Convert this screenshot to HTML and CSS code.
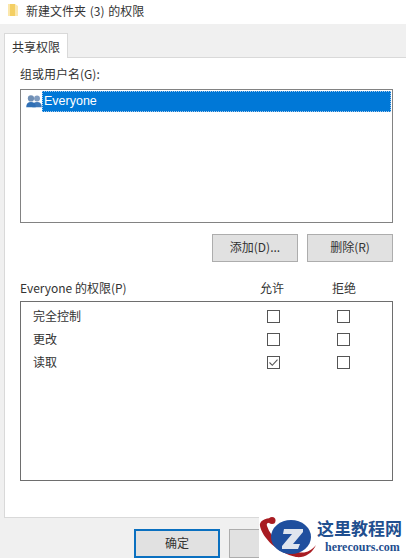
FILE: index.html
```html
<!DOCTYPE html>
<html lang="zh-CN">
<head>
    <meta charset="UTF-8">
    <title>新建文件夹 (3) 的权限</title>
    <link rel="stylesheet" href="styles.css">
</head>
<body>
    <div class="dialog">
        <div class="titlebar">
            <svg class="folder" width="10" height="12" viewBox="0 0 10 12">
                <path d="M0 0h7l3 2v10H0z" fill="#fbe7ac"/>
                <path d="M2 0h5v12H2z" fill="#f4cf63"/>
            </svg>
            <span>新建文件夹 (3) 的权限</span>
        </div>

        <div class="content">
            <div class="tabs">
                <div class="tab">共享权限</div>
            </div>

            <div class="panel">
                <div class="field-label">组或用户名(G):</div>
                <div class="user-list">
                    <div class="user-row">
                        <svg class="users-icon" width="16" height="13" viewBox="0 0 18 15">
                            <circle cx="12.500" cy="4" r="3.400" fill="#7f9cc0"/>
                            <path d="M7 14c0-4 2-6 5.500-6s5.500 2 5.500 6z" fill="#3f78b8"/>
                            <circle cx="5.500" cy="4" r="3.600" fill="#6f8fb5"/>
                            <path d="M0 14c0-4 2-6 5.500-6s5.500 2 5.500 6z" fill="#2f6fb5"/>
                        </svg>
                        <span class="user-name">Everyone</span>
                    </div>
                </div>

                <div class="list-buttons">
                    <button class="btn">添加(D)...</button>
                    <button class="btn">删除(R)</button>
                </div>

                <div class="perm-header">
                    <span class="perm-name">Everyone 的权限(P)</span>
                    <span class="perm-col">允许</span>
                    <span class="perm-col">拒绝</span>
                </div>
                <div class="perm-list">
                    <div class="perm-row">
                        <span class="perm-name">完全控制</span>
                        <span class="perm-col"><span class="check"></span></span>
                        <span class="perm-col"><span class="check"></span></span>
                    </div>
                    <div class="perm-row">
                        <span class="perm-name">更改</span>
                        <span class="perm-col"><span class="check"></span></span>
                        <span class="perm-col"><span class="check"></span></span>
                    </div>
                    <div class="perm-row">
                        <span class="perm-name">读取</span>
                        <span class="perm-col">
                            <span class="check">
                                <svg width="11" height="11" viewBox="0 0 11 11">
                                    <path d="M1.500 5.500l2.800 2.800 5.200-5.600" fill="none" stroke="#555" stroke-width="1.100"/>
                                </svg>
                            </span>
                        </span>
                        <span class="perm-col"><span class="check"></span></span>
                    </div>
                </div>
            </div>

            <div class="footer">
                <button class="btn btn-default">确定</button>
                <button class="btn"></button>
            </div>
        </div>

        <!-- watermark sits over the dialog corner -->
        <div class="watermark">
            <svg width="58" height="42" viewBox="0 0 58 42">
                <path d="M13 2C6 2 0 5 1 10c2 11 17 27 36 31 8 1 16-3 20-12-5 6-11 9-18 7-14-3-27-14-31-26-1-3 1-4 5-3z" fill="#a81c22"/>
                <circle cx="13" cy="4.500" r="3.500" fill="#a81c22"/>
                <ellipse cx="32" cy="21" rx="20" ry="17" fill="#1f4f9e"/>
                <path d="M25 13h19v3L34 28h7l-2 5H23v-3l10-12h-9z" fill="#dfe5ee"/>
            </svg>
            <div class="watermark-text">
                <div class="watermark-title">这里教程网</div>
                <div class="watermark-url">herecours.com</div>
            </div>
        </div>
    </div>
</body>
</html>
```

FILE: styles.css
```css
* {
    box-sizing: border-box;
}

body {
    margin: 0;
    font-family: "Noto Sans CJK SC", "Liberation Sans", sans-serif;
    font-size: 12px;
    color: #333;
    background-color: #f0f0f0;
}

.dialog {
    position: relative;
    width: 406px;
    height: 558px;
    overflow: hidden;
}

.titlebar {
    display: flex;
    align-items: center;
    height: 24px;
    padding: 0 0 4px 8px;
    gap: 8px;
    word-spacing: 1px;
    background-color: #fff;
}

.folder {
    flex: none;
}

.content {
    height: 534px;
    padding: 9px 0 0 4px;
    background-color: #f0f0f0;
}

.tabs {
    display: flex;
    height: 25px;
}

.tab {
    width: 64px;
    height: 25px;
    padding-top: 4px;
    text-align: center;
    background-color: #fff;
    border: 1px solid #d9d9d9;
    border-bottom: none;
    position: relative;
    z-index: 1;
}

.panel {
    height: 461px;
    margin-top: -1px;
    padding: 7px 13px 0 15px;
    background-color: #fff;
    border: 1px solid #d9d9d9;
    border-right: none;
}

.field-label {
    height: 24px;
    line-height: 18px;
}

.user-list {
    height: 134px;
    padding: 1px 0 0 5px;
    border: 1px solid #828282;
}

.user-row {
    display: flex;
    align-items: center;
    height: 21px;
}

.users-icon {
    flex: none;
}

.user-name {
    flex: 1;
    height: 21px;
    margin-right: 1px;
    padding-left: 2px;
    line-height: 21px;
    font-family: "Liberation Sans", sans-serif;
    font-size: 12.500px;
    color: #fff;
    background-color: #0078d7;
    outline: 1px dotted #a9c9ea;
    outline-offset: -1px;
}

.list-buttons {
    display: flex;
    justify-content: flex-end;
    gap: 9px;
    margin-top: 11px;
}

.btn {
    width: 86px;
    height: 28px;
    padding: 0 0 3px;
    font-family: inherit;
    font-size: 12px;
    color: #333;
    background-color: #e1e1e1;
    border: 1px solid #adadad;
}

.perm-header {
    display: flex;
    align-items: center;
    height: 22px;
    margin-top: 14px;
    padding-right: 13px;
}

.perm-header .perm-col {
    width: 72px;
}

.perm-name {
    flex: 1;
}

.perm-col {
    display: flex;
    justify-content: center;
    width: 70px;
}

.perm-list {
    height: 180px;
    margin-top: 3px;
    padding: 3px 13.500px 0 12px;
    border: 1px solid #6e6e6e;
}

.perm-row {
    display: flex;
    align-items: center;
    height: 23px;
}

.perm-row .perm-name {
    padding-bottom: 2px;
}

.check {
    display: block;
    width: 13px;
    height: 13px;
    background-color: #fff;
    border: 1px solid #555;
}

.check svg {
    display: block;
}

.footer {
    display: flex;
    gap: 9px;
    margin-top: 11px;
    padding-left: 130px;
}

.footer .btn {
    height: 29px;
}

.btn-default {
    border: 2px solid #0a70c0;
}

.watermark {
    position: absolute;
    right: 0;
    bottom: 0;
    display: flex;
    width: 147px;
    height: 42px;
    background-color: #fff;
}

.watermark svg {
    flex: none;
}

.watermark-text {
    margin-top: 2px;
}

.watermark-title {
    font-family: "Noto Sans CJK SC", sans-serif;
    font-size: 17px;
    font-weight: 700;
    line-height: 20px;
    color: #1f4f8f;
}

.watermark-url {
    margin: 3px 0 0 8px;
    font-family: "Liberation Serif", serif;
    font-size: 12px;
    font-weight: 700;
    line-height: 13px;
    color: #1f4f8f;
}
```
